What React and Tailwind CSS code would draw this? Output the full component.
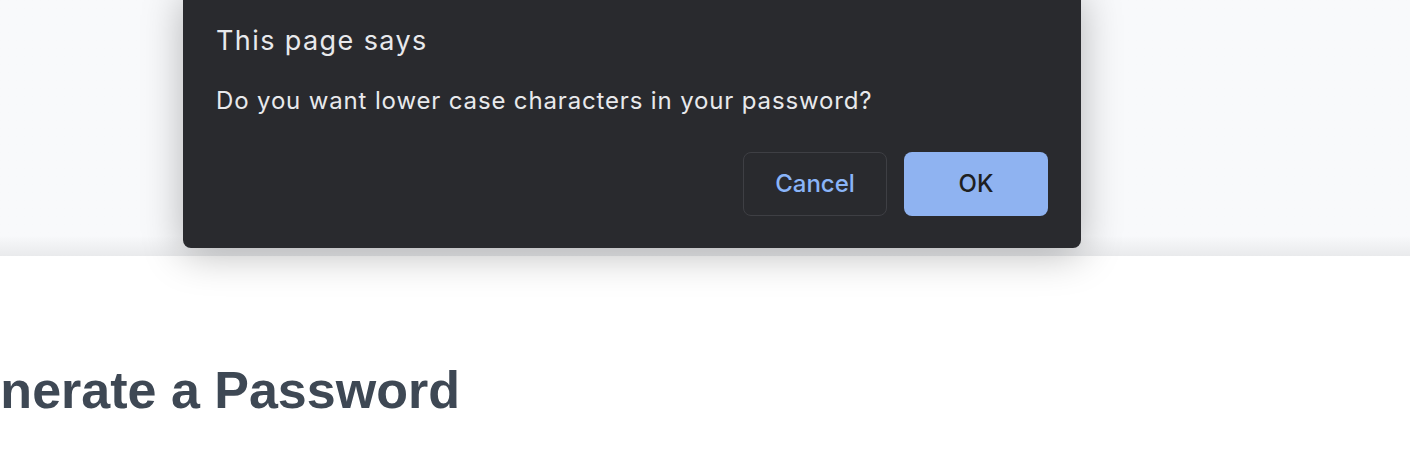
export default function App() {
  return (
    <div className="relative w-[1410px] h-[464px] overflow-hidden bg-white" style={{ fontFamily: "Inter, 'Noto Sans', sans-serif" }}>
      <div className="h-[256px] bg-[#f8f9fb] bg-gradient-to-b from-[#f8f9fb] from-[92%] to-[#e9eaec]" />
      <div className="pt-[108px]">
        <h1 className="ml-[-69px] text-[52px] leading-none font-bold text-[#3e4854] whitespace-nowrap" style={{ fontFamily: "'Liberation Sans', Arial, sans-serif" }}>
          Generate a Password
        </h1>
      </div>

      <div className="absolute left-[183px] top-[-10px] w-[898px] h-[258px] rounded-b-[8px] bg-[#292a2e] shadow-[0_6px_40px_rgba(0,0,0,0.28)] flex flex-col pl-[33px] pr-[33px] pt-[35px]">
        <div className="text-[27px] leading-[32px] tracking-[1.4px] text-[#e8e9ec]">This page says</div>
        <div className="mt-[30px] text-[24px] leading-[28px] tracking-[0.85px] text-[#e8e9ec]">Do you want lower case characters in your password?</div>
        <div className="mt-[37px] flex justify-end gap-[17px]">
          <button className="w-[144px] h-[64px] rounded-[8px] border border-[#3e3f44] text-[#8ab4f8] text-[24px] font-medium">Cancel</button>
          <button className="w-[144px] h-[64px] rounded-[8px] bg-[#8fb3f1] text-[#1e1f22] text-[24px] font-medium">OK</button>
        </div>
      </div>
    </div>
  );
}
